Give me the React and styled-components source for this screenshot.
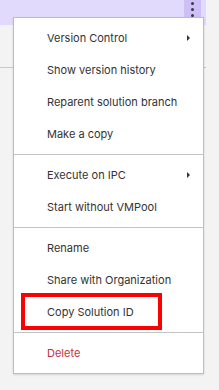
import styled, { createGlobalStyle } from "styled-components";

const Global = createGlobalStyle`
  html, body {
    margin: 0;
    padding: 0;
    background: #f3f3f3;
  }
  body {
    font-family: Inter, "Liberation Sans", sans-serif;
  }
`

const Page = styled.div`
  position: relative;
  width: 219px;
  height: 390px;
  overflow: hidden;
  background: #f3f3f3;
`

const Header = styled.div`
  display: flex;
  justify-content: flex-end;
  width: 206px;
  height: 25px;
  padding-right: 5px;
  box-sizing: border-box;
  background: #e2dafc;
`

const KebabButton = styled.button`
  display: flex;
  flex-direction: column;
  align-items: center;
  justify-content: center;
  gap: 3px;
  width: 17px;
  height: 25px;
  padding: 0 0 6px;
  border: none;
  background: #cdc0f6;
`

const Dot = styled.span`
  width: 3px;
  height: 3px;
  border-radius: 50%;
  background: #3a3550;
`

const Row = styled.div`
  width: 206px;
  height: 42px;
  border-bottom: 1px solid #c8c8c8;
`

const Menu = styled.div`
  position: absolute;
  left: 13px;
  top: 17px;
  width: 191px;
  box-sizing: border-box;
  background: #fff;
  border: 1px solid #bdbdbd;
  box-shadow: 0 1px 2px rgba(0, 0, 0, 0.12);
`

const Section = styled.div`
  position: relative;
  padding: 4px 0;
  border-top: ${(p) => (p.$first ? "none" : "1px solid #c4c4c4")};
`

const Item = styled.div`
  display: flex;
  align-items: center;
  justify-content: space-between;
  height: 32px;
  padding: 0 13px 0 33px;
  font-size: 11px;
  color: ${(p) => (p.$danger ? "#c3343c" : "#333")};
`

const Caret = styled.span`
  width: 0;
  height: 0;
  border-top: 3px solid transparent;
  border-bottom: 3px solid transparent;
  border-left: 3px solid #333;
`

const Highlight = styled.div`
  position: absolute;
  left: 7px;
  top: ${(p) => p.$top}px;
  width: 141px;
  height: 37px;
  box-sizing: border-box;
  border: 4px solid #ff0000;
  pointer-events: none;
`

const sections = [
  [
    { label: "Version Control", sub: true },
    { label: "Show version history" },
    { label: "Reparent solution branch" },
    { label: "Make a copy" },
  ],
  [{ label: "Execute on IPC", sub: true }, { label: "Start without VMPool" }],
  [
    { label: "Rename" },
    { label: "Share with Organization" },
    { label: "Copy Solution ID", marked: true },
  ],
  [{ label: "Delete", danger: true }],
];

function App() {
  return (
    <Page>
      <Global />
      <Header>
        <KebabButton aria-label="More">
          <Dot />
          <Dot />
          <Dot />
        </KebabButton>
      </Header>
      <Row />
      <Menu>
        {sections.map((items, i) => (
          <Section key={i} $first={i === 0}>
            {items.map((it, j) => (
              <Item key={it.label} $danger={it.danger}>
                {it.label}
                {it.sub && <Caret />}
                {it.marked && <Highlight $top={4 + j * 32 - 3} />}
              </Item>
            ))}
          </Section>
        ))}
      </Menu>
    </Page>
  );
}

export default App;
